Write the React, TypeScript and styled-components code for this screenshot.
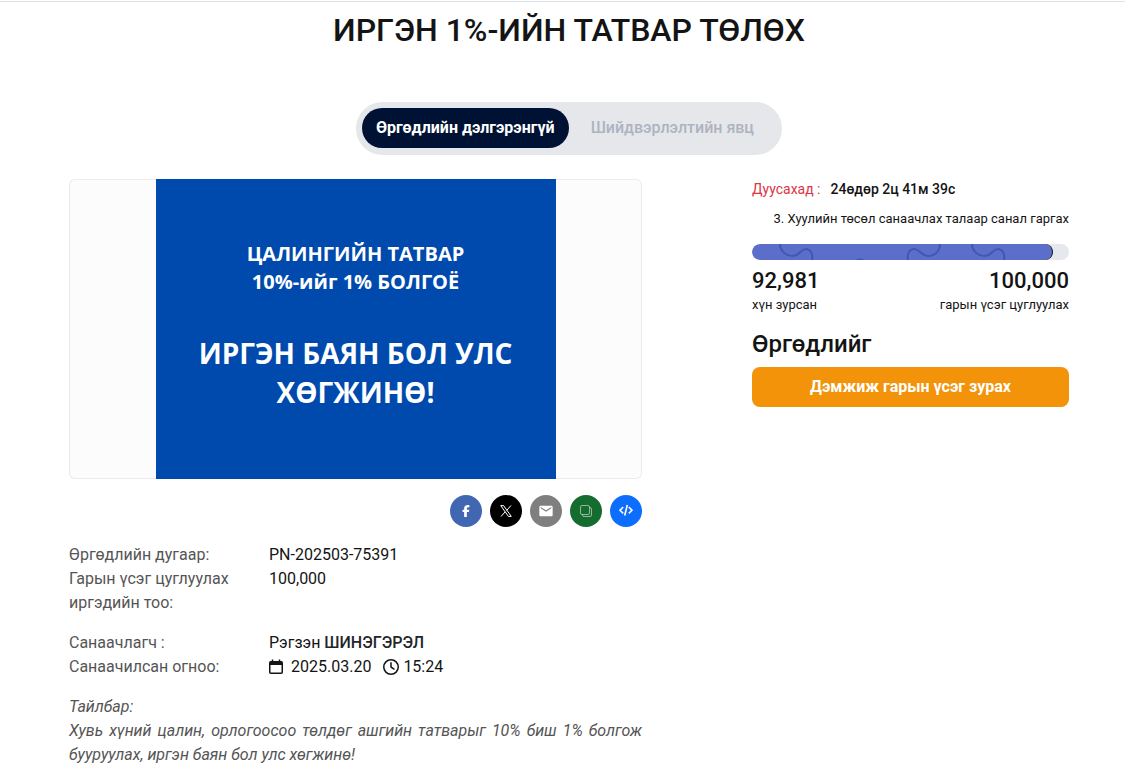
import React from "react";
import styled, { createGlobalStyle } from "styled-components";
import { FaFacebookF, FaRegClock } from "react-icons/fa6";
import { MdEmail } from "react-icons/md";

const GlobalStyle = createGlobalStyle`
  *, *::before, *::after { box-sizing: border-box; }
  body {
    margin: 0;
    background: #fff;
    color: #141414;
    font-family: Roboto, "Noto Sans", sans-serif;
    font-size: 16px;
    line-height: 24px;
  }
  h1, h2, p, dl, dd { margin: 0; }
  button { font-family: inherit; border: 0; cursor: pointer; }
`;

const Page = styled.main`
  border-top: 1px solid #fff;
  padding: 0 56px 8px 69px;
  position: relative;
  &::before {
    content: "";
    position: absolute;
    inset: 0 0 auto 0;
    border-top: 1px solid #dee2e6;
  }
`;

const Title = styled.h1`
  padding-top: 9px;
  font-size: 32px;
  line-height: 40px;
  font-weight: 500;
  text-align: center;
`;

const Tabs = styled.div`
  display: flex;
  width: fit-content;
  margin: 52px auto 24px;
  padding: 6px 6px 7px;
  border-radius: 27px;
  background: #e5e7eb;
`;

const Tab = styled.button<{ $active?: boolean }>`
  height: 40px;
  padding: ${(p) => (p.$active ? "0 14px 2px" : "0 22px 2px")};
  border-radius: 20px;
  background: ${(p) => (p.$active ? "#001233" : "transparent")};
  color: ${(p) => (p.$active ? "#fff" : "#adb3c0")};
  font-size: 16px;
  font-weight: ${(p) => (p.$active ? 700 : 500)};
`;

const Columns = styled.div`
  display: grid;
  grid-template-columns: 573fr 317fr;
  gap: 110px;
  align-items: start;
`;

const Frame = styled.div`
  display: flex;
  justify-content: center;
  border-radius: 6px;
  background: #fcfcfc;
  box-shadow: inset 0 0 0 1px #ebebeb;
`;

const Poster = styled.div`
  display: flex;
  flex-direction: column;
  justify-content: center;
  gap: 38px;
  width: 400px;
  min-height: 300px;
  padding-bottom: 6px;
  background: #004aad;
  color: #fff;
  text-align: center;
  font-family: "Open Sans", "Noto Sans", sans-serif;
  font-weight: 700;
`;

const PosterLead = styled.p`
  font-size: 20px;
  line-height: 28px;
`;

const PosterMain = styled.p`
  font-size: 28px;
  line-height: 39px;
`;

const ShareRow = styled.div`
  display: flex;
  justify-content: flex-end;
  gap: 8px;
  margin: 16px 0;
`;

const ShareButton = styled.button<{ $color: string }>`
  display: flex;
  align-items: center;
  justify-content: center;
  width: 32px;
  height: 32px;
  padding: 0;
  border-radius: 50%;
  background: ${(p) => p.$color};
  color: #fff;
`;

const Details = styled.dl`
  display: grid;
  grid-template-columns: 184px 1fr;
  column-gap: 16px;
  margin-bottom: 16px;
`;

const Term = styled.dt`
  color: #555;
`;

const Value = styled.dd`
  display: flex;
  align-items: center;
  align-self: start;
`;

const Person = styled.span`
  strong { font-weight: 500; color: #212529; }
`;

const DateText = styled.span`
  margin: 0 12px 0 8px;
`;

const TimeText = styled.span`
  margin-left: 4px;
`;

const Note = styled.p`
  color: #555;
  font-style: italic;
  text-align: justify;
`;

const Countdown = styled.p`
  display: flex;
  gap: 10px;
  font-size: 14px;
  line-height: 20px;
  font-weight: 500;
`;

const CountdownLabel = styled.span`
  color: #dc3545;
  font-weight: 400;
`;

const Category = styled.p`
  margin: 10px 0 15px;
  font-size: 13px;
  line-height: 20px;
  text-align: right;
`;

const Track = styled.div`
  height: 16px;
  border-radius: 8px;
  background: #e5e9ed;
  overflow: hidden;
`;

const Fill = styled.div`
  height: 16px;
  border-radius: 8px;
  border-right: 1px solid #141414;
  background: #5a6eca;
  overflow: hidden;
  svg { display: block; }
`;

const Counts = styled.div`
  display: flex;
  justify-content: space-between;
  margin-top: 7px;
`;

const Count = styled.div<{ $end?: boolean }>`
  text-align: ${(p) => (p.$end ? "right" : "left")};
  font-size: 13px;
  line-height: 20px;
  strong {
    display: block;
    font-size: 22px;
    line-height: 28px;
    font-weight: 500;
  }
`;

const SupportTitle = styled.h2`
  margin: 15px 0 9px;
  font-size: 24px;
  line-height: 28px;
  font-weight: 500;
`;

const SupportButton = styled.button`
  width: 100%;
  height: 40px;
  padding-bottom: 2px;
  border-radius: 8px;
  background: #f2930a;
  color: #fff;
  font-size: 16px;
  font-weight: 700;
`;

const XIcon = () => (
  <svg width="12" height="12" viewBox="0 0 24 24" fill="none" stroke="#fff" strokeWidth="2">
    <path d="M1.5 1.2h5.6l15.4 21.6h-5.6z" />
    <path d="M22 1l-9 10.2M10.6 13.4L2 23" />
  </svg>
);

const CopyIcon = () => (
  <svg width="14" height="14" viewBox="0 0 14 14" fill="none" stroke="#fff" strokeOpacity="0.65" strokeWidth="0.8">
    <rect x="1.5" y="1.5" width="9" height="9" rx="1.5" />
    <path d="M3.5 10.5v.5q0 1.5 1.5 1.5h6q1.5 0 1.5-1.5V5q0-1.5-1.5-1.5h-.5" />
  </svg>
);

const CodeIcon = () => (
  <svg width="14" height="14" viewBox="0 0 14 14" fill="none" stroke="#fff" strokeWidth="1.6">
    <path d="M4.2 3L1 6.2l3.2 3.2M9.8 3L13 6.2 9.8 9.4M8.3 1L5.7 11.5" />
  </svg>
);

const CalendarIcon = () => (
  <svg width="14" height="16" viewBox="0 0 14 16" fill="none" stroke="currentColor" strokeWidth="1.5">
    <rect x="0.75" y="2.75" width="12.5" height="11.5" rx="1" />
    <path d="M1 4.5h12" strokeWidth="3" />
    <path d="M3.5 0.5v3M10.5 0.5v3" />
  </svg>
);

const Waves = () => (
  <svg width="301" height="16" viewBox="0 0 301 16" fill="none" stroke="#4257ae" strokeWidth="2" aria-hidden="true">
    <path d="M28 0C28 7 34 12 41 12C48 12 48 5 54 5C59 5 61 10 60 16" />
    <path d="M188 0C188 7 183 12 176 12C169 12 168 5 162 5C157 5 155 10 156 16" />
    <path d="M220 0C220 7 226 12 233 12C240 12 240 5 246 5C251 5 253 10 252 16" />
    <path d="M103 17q5-3 10 0" />
  </svg>
);

const signed = 92981;
const goal = 100000;

export default function App() {
  return (
    <>
      <GlobalStyle />
      <Page>
        <Title>ИРГЭН 1%-ИЙН ТАТВАР ТӨЛӨХ</Title>
        <Tabs role="tablist">
          <Tab $active role="tab" aria-selected="true">Өргөдлийн дэлгэрэнгүй</Tab>
          <Tab role="tab" aria-selected="false">Шийдвэрлэлтийн явц</Tab>
        </Tabs>
        <Columns>
          <section>
            <Frame>
              <Poster>
                <PosterLead>ЦАЛИНГИЙН ТАТВАР<br />10%-ийг 1% БОЛГОЁ</PosterLead>
                <PosterMain>ИРГЭН БАЯН БОЛ УЛС<br />ХӨГЖИНӨ!</PosterMain>
              </Poster>
            </Frame>
            <ShareRow>
              <ShareButton $color="#4267b2" aria-label="Facebook"><FaFacebookF size={12} /></ShareButton>
              <ShareButton $color="#000" aria-label="X"><XIcon /></ShareButton>
              <ShareButton $color="#7f7f7f" aria-label="Email"><MdEmail size={16} /></ShareButton>
              <ShareButton $color="#146c2e" aria-label="Copy"><CopyIcon /></ShareButton>
              <ShareButton $color="#0d6efd" aria-label="Embed"><CodeIcon /></ShareButton>
            </ShareRow>
            <Details>
              <Term>Өргөдлийн дугаар:</Term>
              <Value>PN-202503-75391</Value>
              <Term>Гарын үсэг цуглуулах иргэдийн тоо:</Term>
              <Value>100,000</Value>
            </Details>
            <Details>
              <Term>Санаачлагч :</Term>
              <Value><Person>Рэгзэн <strong>ШИНЭГЭРЭЛ</strong></Person></Value>
              <Term>Санаачилсан огноо:</Term>
              <Value>
                <CalendarIcon />
                <DateText>2025.03.20</DateText>
                <FaRegClock size={16} />
                <TimeText>15:24</TimeText>
              </Value>
            </Details>
            <Note>Тайлбар:</Note>
            <Note>Хувь хүний цалин, орлогоосоо төлдөг ашгийн татварыг 10% биш 1% болгож бууруулах, иргэн баян бол улс хөгжинө!</Note>
          </section>
          <aside>
            <Countdown>
              <CountdownLabel>Дуусахад :</CountdownLabel>
              <span>24өдөр 2ц 41м 39с</span>
            </Countdown>
            <Category>3. Хуулийн төсөл санаачлах талаар санал гаргах</Category>
            <Track role="progressbar" aria-valuenow={signed} aria-valuemin={0} aria-valuemax={goal}>
              <Fill style={{ width: "95%" }}><Waves /></Fill>
            </Track>
            <Counts>
              <Count><strong>92,981</strong>хүн зурсан</Count>
              <Count $end><strong>100,000</strong>гарын үсэг цуглуулах</Count>
            </Counts>
            <SupportTitle>Өргөдлийг</SupportTitle>
            <SupportButton>Дэмжиж гарын үсэг зурах</SupportButton>
          </aside>
        </Columns>
      </Page>
    </>
  );
}
